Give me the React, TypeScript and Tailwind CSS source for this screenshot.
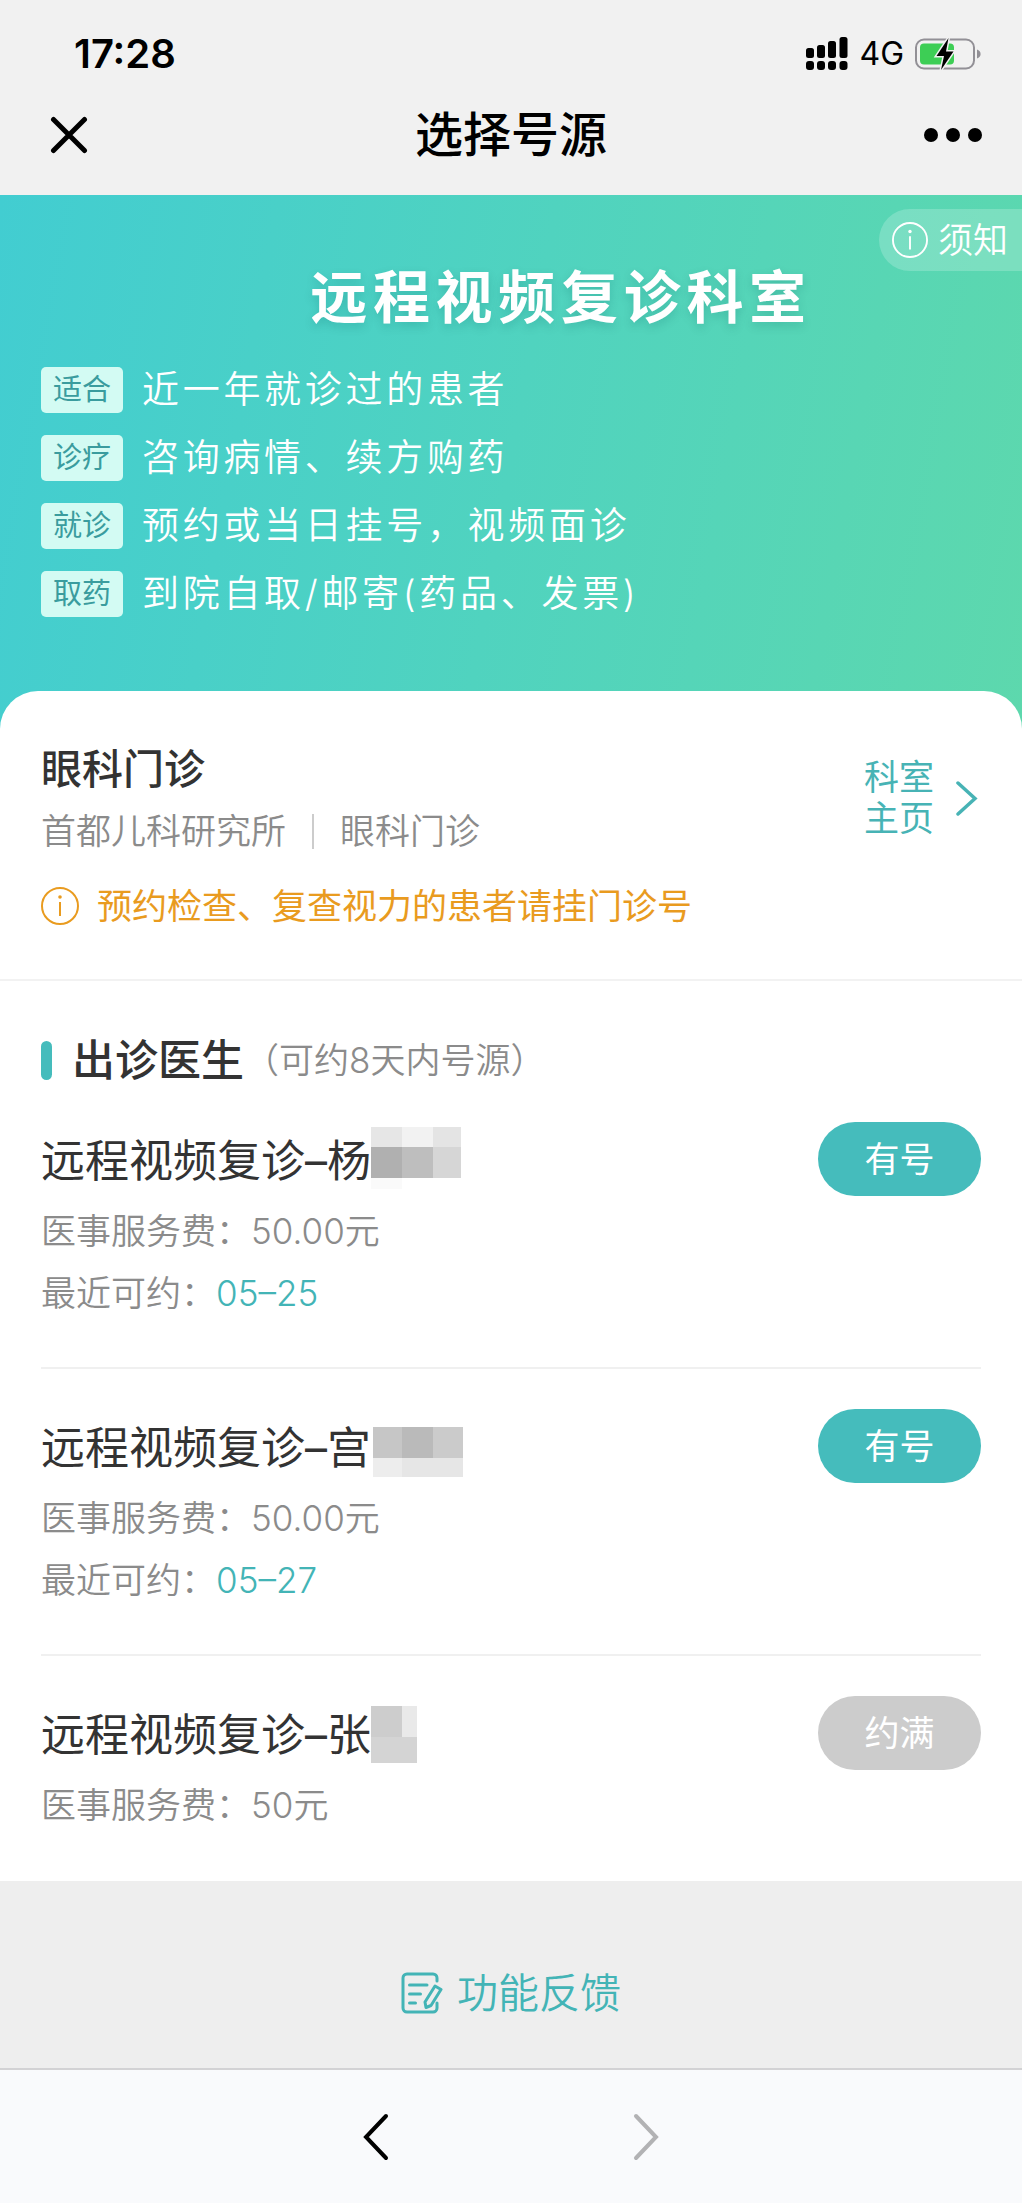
import { ReactNode } from 'react';

interface Cell {
  x: number;
  y: number;
  w: number;
  h: number;
  fill: string;
}

interface Doctor {
  name: string;
  fee: string;
  nextDate?: string;
  available: boolean;
  maskWidth: number;
  mask: Cell[];
}

const tips = [
  { tag: '适合', text: '近一年就诊过的患者' },
  { tag: '诊疗', text: '咨询病情、续方购药' },
  { tag: '就诊', text: '预约或当日挂号，视频面诊' },
  { tag: '取药', text: '到院自取/邮寄(药品、发票)' },
];

const doctors: Doctor[] = [
  {
    name: '远程视频复诊–杨',
    fee: '50.00元',
    nextDate: '05–25',
    available: true,
    maskWidth: 90,
    mask: [
      { x: 0, y: 0, w: 31, h: 20, fill: '#e6e6e6' },
      { x: 31, y: 0, w: 31, h: 20, fill: '#f2f2f2' },
      { x: 62, y: 0, w: 28, h: 20, fill: '#e4e4e4' },
      { x: 0, y: 20, w: 31, h: 31, fill: '#b0b0b0' },
      { x: 31, y: 20, w: 31, h: 31, fill: '#bebebe' },
      { x: 62, y: 20, w: 28, h: 31, fill: '#d6d6d6' },
      { x: 0, y: 51, w: 31, h: 11, fill: '#fafafa' },
    ],
  },
  {
    name: '远程视频复诊–宫',
    fee: '50.00元',
    nextDate: '05–27',
    available: true,
    maskWidth: 92,
    mask: [
      { x: 2, y: 13, w: 29, h: 31, fill: '#c6c6c6' },
      { x: 31, y: 13, w: 31, h: 31, fill: '#bababa' },
      { x: 62, y: 13, w: 30, h: 31, fill: '#cbcbcb' },
      { x: 2, y: 44, w: 29, h: 19, fill: '#ededed' },
      { x: 31, y: 44, w: 61, h: 19, fill: '#e6e6e6' },
    ],
  },
  {
    name: '远程视频复诊–张',
    fee: '50元',
    available: false,
    maskWidth: 46,
    mask: [
      { x: 0, y: 5, w: 31, h: 31, fill: '#cdcdcd' },
      { x: 31, y: 5, w: 15, h: 31, fill: '#e9e9e9' },
      { x: 0, y: 36, w: 46, h: 26, fill: '#d4d4d4' },
    ],
  },
];

function InfoIcon({ className }: { className: string }) {
  return (
    <svg viewBox="0 0 38 38" className={className} fill="none" stroke="currentColor" strokeWidth="2">
      <circle cx="19" cy="19" r="18" />
      <path d="M19 15v14" />
      <circle cx="19" cy="10" r="1.8" fill="currentColor" stroke="none" />
    </svg>
  );
}

function SignalIcon() {
  return (
    <svg viewBox="0 0 42 34" className="h-[34px] w-[42px]" fill="#000">
      <rect x="0" y="11" width="8" height="10" rx="2.5" />
      <rect x="11" y="8" width="8" height="13" rx="2.5" />
      <rect x="22" y="4" width="8" height="17" rx="2.5" />
      <rect x="33.5" y="0" width="8" height="21" rx="2.5" />
      <rect x="0" y="24" width="8" height="9" rx="3" />
      <rect x="11" y="24" width="8" height="9" rx="3" />
      <rect x="22" y="24" width="8" height="9" rx="3" />
      <rect x="33.5" y="24" width="8" height="9" rx="3" />
    </svg>
  );
}

function BatteryIcon() {
  return (
    <svg viewBox="0 0 67 34" className="h-[34px] w-[67px]" fill="none">
      <rect x="1" y="2.5" width="58" height="29" rx="8" stroke="#929096" strokeWidth="2" />
      <path d="M62 12.5c2.3.8 3.6 2.5 3.6 4.5s-1.3 3.7-3.6 4.5z" fill="#929096" />
      <rect x="5" y="6.5" width="34" height="21" rx="4" fill="#3dce55" />
      <path
        d="M33.5 1 21.5 19h7.5l-3 14L38.5 14.5H31z"
        fill="#000"
        stroke="#f1f1f1"
        strokeWidth="3"
        paintOrder="stroke"
      />
    </svg>
  );
}

function FeedbackIcon() {
  return (
    <svg
      viewBox="0 0 42 42"
      className="h-[42px] w-[42px]"
      fill="none"
      stroke="currentColor"
      strokeWidth="3"
      strokeLinecap="round"
      strokeLinejoin="round"
    >
      <path d="M36 9V6a4 4 0 0 0-4-4H6a4 4 0 0 0-4 4v30a4 4 0 0 0 4 4h26a4 4 0 0 0 4-4v-5" />
      <path d="M8.5 13H26M8.5 22h11M8.5 31h6" />
      <path d="M34 14l6 3.500-10 16-5 2-1-5.500z" />
    </svg>
  );
}

function NameMask({ width, cells }: { width: number; cells: Cell[] }) {
  return (
    <svg width={width} height={68} viewBox={`0 0 ${width} 68`} shapeRendering="crispEdges" aria-hidden="true">
      {cells.map((c) => (
        <rect key={`${c.x}-${c.y}`} x={c.x} y={c.y} width={c.w} height={c.h} fill={c.fill} />
      ))}
    </svg>
  );
}

function InfoLine({ label, children }: { label: string; children: ReactNode }) {
  return (
    <p className="text-[35px] leading-[62px] font-[350] text-[#8b8b8b]">
      {label}：{children}
    </p>
  );
}

function DoctorRow({ doctor }: { doctor: Doctor }) {
  return (
    <li className="flex items-start justify-between border-b-2 border-[#f0f0f0] pt-10 pb-[43px] first:pt-0 last:border-b-0">
      <div>
        <h3 className="flex h-[78px] items-center text-[44px] text-[#333]">
          {doctor.name}
          <NameMask width={doctor.maskWidth} cells={doctor.mask} />
        </h3>
        <InfoLine label="医事服务费">{doctor.fee}</InfoLine>
        {doctor.nextDate && (
          <InfoLine label="最近可约">
            <span className="text-[#43b4b6]">{doctor.nextDate}</span>
          </InfoLine>
        )}
      </div>
      {doctor.available ? (
        <button className="h-[74px] w-[163px] rounded-full bg-[#45bcbc] text-[35px] text-white">有号</button>
      ) : (
        <button disabled className="h-[74px] w-[163px] rounded-full bg-[#ccc] text-[35px] text-white">
          约满
        </button>
      )}
    </li>
  );
}

export default function App() {
  return (
    <div className="bg-white font-['Inter','Noto_Sans_CJK_SC',sans-serif]">
      <header className="bg-[#f1f1f1] pt-6 pb-[9px] text-black">
        {/* Status bar */}
        <div className="flex h-[60px] items-center justify-between pr-10 pl-[74px]">
          <span className="text-[40px] font-semibold">17:28</span>
          <div className="flex items-center gap-[11px]">
            <SignalIcon />
            <span className="text-[32px]">4G</span>
            <BatteryIcon />
          </div>
        </div>

        {/* Title bar */}
        <div className="flex h-[102px] items-center justify-between px-10">
          <button aria-label="关闭" className="flex w-[58px] justify-center">
            <svg viewBox="0 0 38 38" className="h-[38px] w-[38px]" stroke="#000" strokeWidth="5" strokeLinecap="round">
              <path d="M3.5 3.5l31 31M34.5 3.5l-31 31" />
            </svg>
          </button>
          <h1 className="text-[48px] font-medium">选择号源</h1>
          <button aria-label="更多">
            <svg viewBox="0 0 58 14" className="h-[14px] w-[58px]">
              <circle cx="7" cy="7" r="7" />
              <circle cx="29" cy="7" r="7" />
              <circle cx="51" cy="7" r="7" />
            </svg>
          </button>
        </div>
      </header>

      {/* Banner */}
      <section className="relative bg-linear-[100deg] from-[#42cdd1] via-[#50d3bf] to-[#5dd8ad] px-[41px] pt-[67px] pb-[114px] text-white">
        <button className="absolute top-[14px] right-0 flex h-[62px] items-center gap-2.5 rounded-l-full bg-white/20 pr-3.5 pl-[13px] text-[35px] font-[350]">
          <InfoIcon className="h-9 w-9" />
          须知
        </button>
        <h2 className="pl-[100px] text-center text-[57px] leading-[72px] font-bold tracking-widest text-shadow-[0_4px_10px_rgb(0_90_90/0.2)]">
          远程视频复诊科室
        </h2>
        <ul className="mt-[33px] flex flex-col gap-[22px]">
          {tips.map((tip) => (
            <li key={tip.tag} className="flex items-center gap-[19px]">
              <span className="flex h-[46px] w-[82px] items-center justify-center rounded-[5px] bg-[#d3fbf3] text-[29px] text-[#3a9c9e]">
                {tip.tag}
              </span>
              <span className="text-[37px] leading-[46px] font-[350] tracking-widest">{tip.text}</span>
            </li>
          ))}
        </ul>
      </section>

      <main className="relative -mt-10 rounded-t-[38px] bg-white">
        {/* Department */}
        <section className="border-b-2 border-[#f2f2f2] px-[41px] pt-12 pb-[43px]">
          <div className="flex items-start justify-between">
            <div>
              <h2 className="text-[41px] leading-[60px] font-medium text-[#333]">眼科门诊</h2>
              <p className="flex items-center text-[35px] leading-[64px] font-[350] text-[#8b8b8b]">
                首都儿科研究所
                <span className="mx-[26px] h-[35px] w-[2px] bg-[#ccc]" />
                眼科门诊
              </p>
            </div>
            <a href="#department" className="flex items-center gap-5 pt-[18px] pr-[3px] text-[35px] leading-[41px] text-[#47b3b5]">
              <span>
                科室
                <br />
                主页
              </span>
              <svg viewBox="0 0 24 36" className="h-9 w-6" fill="none" stroke="currentColor" strokeWidth="3.5" strokeLinecap="round">
                <path d="M4 3l17 15.500L4 34" />
              </svg>
            </a>
          </div>
          <p className="mt-[13px] flex items-center gap-[18px] text-[35px] leading-[60px] text-[#e99b1f]">
            <InfoIcon className="h-[38px] w-[38px]" />
            预约检查、复查视力的患者请挂门诊号
          </p>
        </section>

        {/* Doctors */}
        <section className="px-[41px] pt-[49px] pb-0.5">
          <div className="mb-8 flex items-center leading-[60px]">
            <span className="mr-5 h-[39px] w-[11px] rounded-full bg-[#45bcbc]" />
            <h2 className="text-[43px] font-medium text-[#333]">出诊医生</h2>
            <span className="text-[35px] font-[350] text-[#8b8b8b]">（可约8天内号源）</span>
          </div>
          <ul>
            {doctors.map((doctor) => (
              <DoctorRow key={doctor.name} doctor={doctor} />
            ))}
          </ul>
        </section>
      </main>

      <div className="flex justify-center bg-[#eee] pt-[82px] pb-[45px]">
        <a href="#feedback" className="flex items-center gap-3.5 text-[41px] leading-[60px] font-[350] text-[#43b4b6]">
          <FeedbackIcon />
          功能反馈
        </a>
      </div>

      {/* Browser navigation */}
      <nav className="flex h-[135px] items-center justify-center gap-[222px] border-t-2 border-[#d2d2d4] bg-[#f9fafc]">
        <button aria-label="后退">
          <svg viewBox="0 0 48 48" className="h-12 w-12" fill="none" stroke="#000" strokeWidth="4" strokeLinecap="round">
            <path d="M34 3L14 24l20 21" />
          </svg>
        </button>
        <button aria-label="前进" disabled>
          <svg viewBox="0 0 48 48" className="h-12 w-12" fill="none" stroke="#b2b2b4" strokeWidth="4" strokeLinecap="round">
            <path d="M14 3l20 21-20 21" />
          </svg>
        </button>
      </nav>
    </div>
  );
}
